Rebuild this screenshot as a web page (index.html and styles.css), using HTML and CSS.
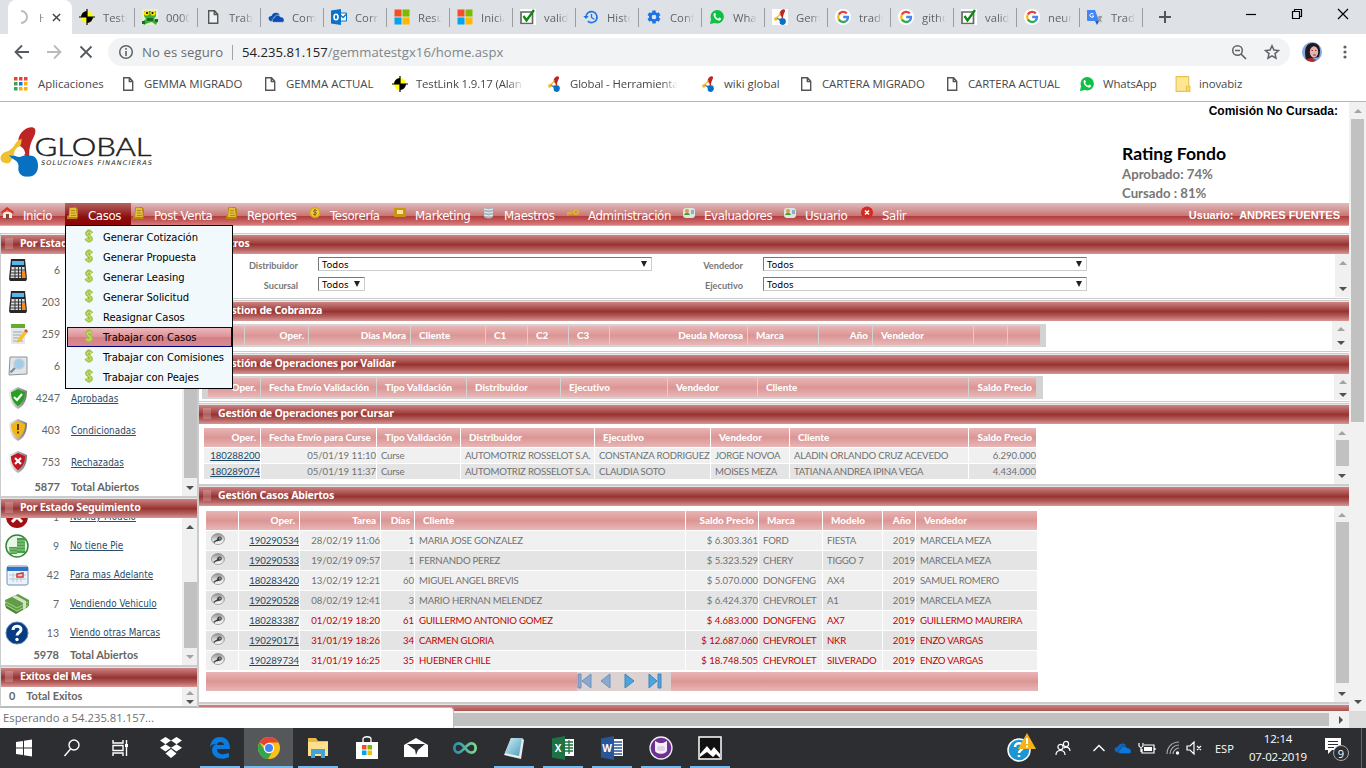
FILE: index.html
```html
<!DOCTYPE html>
<html lang="es">
<head>
<meta charset="utf-8">
<title>Home</title>
<link rel="stylesheet" href="styles.css">
</head>
<body>
<svg class="defs" aria-hidden="true">
  <defs>
    <linearGradient id="g-shield" x1="0" x2="1"><stop offset="0" stop-color="#eee"/><stop offset="1" stop-color="#777"/></linearGradient>
    <linearGradient id="g-teal" x1="0" x2="1"><stop offset="0" stop-color="#2a8fb0"/><stop offset="1" stop-color="#7ed88a"/></linearGradient>
    <linearGradient id="g-note" x1="0" x2="1" y2="1"><stop offset="0" stop-color="#d5eef5"/><stop offset="1" stop-color="#4a9fc0"/></linearGradient>
    <linearGradient id="g-lens" x1="0" x2="0" y2="1"><stop offset="0" stop-color="#8f8f8f"/><stop offset=".6" stop-color="#dedede"/><stop offset="1" stop-color="#fff"/></linearGradient>
  </defs>
  <symbol id="target" viewBox="0 0 16 16"><circle cx="8" cy="8" r="6" fill="#ff0"/><path d="M8 8V2a6 6 0 0 1 6 6zM8 8v6a6 6 0 0 1-6-6z" fill="#000" transform="rotate(90 8 8)"/><path d="M8 0v16M0 8h16" stroke="#000" stroke-width="1.2"/></symbol>
  <symbol id="frog" viewBox="0 0 16 16"><path d="M0 0h16v16H0z" fill="#e4f3d6"/><path d="M2 2h12v5l-2 3 4 2-2 4-4-3-4 1-4 2-2-3 4-3-2-3z" fill="#3cae3c"/><path d="M5 9h6v3H5zM0 12h3v3H0zM13 10h3v3h-3z" fill="#196c21"/><circle cx="4.500" cy="4" r="2.600" fill="#ffe000"/><circle cx="11" cy="4" r="2.600" fill="#ffe000"/><circle cx="5" cy="4" r="1"/><circle cx="10.500" cy="4" r="1"/></symbol>
  <symbol id="page" viewBox="0 0 16 16"><path d="M3.700 1.700h5.800l3.200 3.500v9H3.700zM9.300 2v3.500h3" fill="#fff" fill-opacity=".5" stroke="#555" stroke-width="1.400"/></symbol>
  <symbol id="cloud" viewBox="0 0 18 12"><path d="M1 9c-1-3 1-4 3-4 1-4 6-5 9-2l-5 3-4 5c-1 0-2-1-3-2z" fill="#1152a8"/><path d="M6 12c-2-1-2-4 1-5 1-4 6-4 7-1 3-.5 4 2 4 3 1 2-1 3-2 3z" fill="#0a4fb8" stroke="#dee1e6" stroke-width=".7"/></symbol>
  <symbol id="tcloud" viewBox="0 0 18 12"><path d="M1 9c-1-3 1-4 3-4 1-4 6-5 9-2l-5 3-4 5c-1 0-2-1-3-2z" fill="#0a69c8"/><path d="M6 12c-2-1-2-4 1-5 1-4 6-4 7-1 3-.5 4 2 4 3 1 2-1 3-2 3z" fill="#0a79dc" stroke="#2b2e33" stroke-width=".6"/></symbol>
  <symbol id="outlook" viewBox="0 0 16 16"><path d="M8 4h7.500v8H8z" fill="#fff" stroke="#0a72c8"/><path d="M9 5.500l3 3 4-4" fill="none" stroke="#0a72c8" stroke-width="1.300"/><path d="M0 1.500L10 0v16L0 14.500z" fill="#0a72c8"/><ellipse cx="5" cy="8" rx="2" ry="2.800" fill="none" stroke="#fff" stroke-width="1.600"/></symbol>
  <symbol id="ms" viewBox="0 0 16 16"><path d="M.5.5h7v7h-7z" fill="#f25022"/><path d="M8.500.5h7v7h-7z" fill="#7fba00"/><path d="M.5 8.500h7v7h-7z" fill="#00a4ef"/><path d="M8.500 8.500h7v7h-7z" fill="#ffb900"/></symbol>
  <symbol id="check" viewBox="0 0 16 16"><path d="M0 0h16v16H0z" fill="#fff"/><path d="M1 3h11.500v11.500H1z" fill="#fff" stroke="#666" stroke-width="1.700"/><path d="M3.500 7l3 4.500L14 1" fill="none" stroke="#0b8a0b" stroke-width="2.300"/></symbol>
  <symbol id="hist" viewBox="0 0 16 16"><path d="M3 8a5.500 5.500 0 1 1 1.800 4.200" fill="none" stroke="#1a73e8" stroke-width="1.600"/><path d="M.3 7h5.400L3 10z" fill="#1a73e8"/><path d="M8.500 5v3.500l2.800 1.700" fill="none" stroke="#1a73e8" stroke-width="1.300"/></symbol>
  <symbol id="gear" viewBox="0 0 16 16"><circle cx="8" cy="8" r="3.600" fill="none" stroke="#1a73e8" stroke-width="3"/><path d="M8 1.500v3M8 11.500v3M2.400 4.800L5 6.300M11 9.700l2.600 1.500M2.400 11.200L5 9.700M11 6.300l2.600-1.500" stroke="#1a73e8" stroke-width="3.400"/><circle cx="8" cy="8" r="2.300" fill="#dee1e6"/></symbol>
  <symbol id="wa" viewBox="0 0 16 16"><circle cx="8.200" cy="7.800" r="6.700" fill="#0cc143"/><path d="M1 15l1-5 4 4z" fill="#0cc143"/><path d="M5 4.300c1-1 1.500 0 2 1.500L6.200 7c.7 1.300 1.600 2 2.900 2.700l1.100-1.100 2 1c-.4 2.700-2.600 2.300-4.600 1.200C5.700 9.700 3.700 6.300 5 4.300z" fill="#fff"/></symbol>
  <symbol id="glob" viewBox="0 0 40 52"><path d="M23 29c2-6-5-9-4-16C21 3 33-2 36 3c2 8-7 11-6 29z" fill="#bf2424"/><path d="M22 13c1 8-5 11-8 17-2 4-3 9-8 8-8-1-7-10 1-12 9-3 7-10 15-13z" fill="#f0c030"/><path d="M9 30c7 1 13 0 21 0 7 0 9 5 9 11 0 7-5 11-11 11-7 0-10-5-9-11 0-6-5-6-10-11z" fill="#0870c0"/><path d="M14 29c2-9 9-12 12-1-3 4-8 5-12 1z" fill="#fff"/></symbol>
  <symbol id="gg" viewBox="0 0 16 16"><circle cx="8" cy="8" r="8" fill="#fff"/><g fill="none" stroke-width="2.300"><path d="M11.800 4.400A5 5 0 0 0 3.800 5.600" stroke="#ea4335"/><path d="M3.800 5.600a5 5 0 0 0 0 4.800" stroke="#fbbc05"/><path d="M3.800 10.400a5 5 0 0 0 7.600 1.400" stroke="#34a853"/><path d="M11.400 11.800A5 5 0 0 0 13 8H8.200" stroke="#4285f4"/></g></symbol>
  <symbol id="trans" viewBox="0 0 16 16"><path d="M8 5h8v10H9z" fill="#ddd"/><path d="M0 1h8l4 11H1a1 1 0 0 1-1-1z" fill="#4285f4"/><path d="M8 12h4l-2 4z" fill="#2258c4"/><path d="M6.500 5a2 2 0 1 0 .4 2H5" fill="none" stroke="#fff"/><path d="M11 8h4M13 7c1 4-1 6-2 6M11.500 9l3 4" fill="none" stroke="#777" stroke-width=".9"/></symbol>
  <symbol id="coins" viewBox="0 0 14 14"><path d="M3 1.500L10 1l2 2v8l-1 2H1v-3l2-1z" fill="#b8820f"/><path d="M4 2h6l1 9H3z" fill="#e3bd3c"/><path d="M5 4.500h4M5 7h4M5 9.500h5" stroke="#b5861a"/></symbol>
  <symbol id="dollar" viewBox="0 0 10 14"><path d="M7.800 4.200C7 2 2.300 2 2.600 4.700S7.500 7 7.400 9.600 2.500 12 2 9.500M5 .5v13" fill="none" stroke="#9cc044" stroke-width="3"/><path d="M7.200 4C6.500 2.700 3.200 2.600 3.200 4.600S7 7.300 7 9.500s-3.500 2-4.400.4" fill="none" stroke="#c9df66" stroke-width="1.200"/></symbol>
  <symbol id="calc" viewBox="0 0 20 22"><path d="M3 0h14l2 20-1 2H2l-1-2z" fill="#26282c"/><path d="M4 2h12v4H4z" fill="#56b7ec"/><path d="M3.500 8h13l1 11h-15z" fill="#ddd"/><path d="M2 11h16M2 14h16M2 17h16M7 7v12M10.500 7v12M13.500 7v12" stroke="#333"/><path d="M14 12h3l.5 7H14z" fill="#f58a1f"/></symbol>
  <symbol id="note" viewBox="0 0 20 22"><path d="M3 3h14v18H3z" fill="#e6e9eb"/><path d="M3 1h14v4H3z" fill="#64ad2c"/><path d="M5 9h9M5 12h8M5 15h7M5 18h10" stroke="#9aa"/><path d="M10 16l6-8 3 2-6 8-4 2z" fill="#f7c02c"/><path d="M16 8l2-2 2 2-1 2z" fill="#d64d38"/></symbol>
  <symbol id="find" viewBox="0 0 20 20"><path d="M2 1h17v17L1 19z" fill="#dfe5e9" stroke="#8d9499"/><circle cx="11" cy="8" r="5" fill="#9fcdea" stroke="#c2ced6" stroke-width="1.500"/><path d="M7 12l-4.500 4.500" stroke="#7d8890" stroke-width="2.200"/></symbol>
  <symbol id="shield" viewBox="0 0 20 22"><path d="M10 0l9 4c0 8-2 14-9 18C3 18 1 12 1 4z" fill="url(#g-shield)"/><path d="M10 2l7 3.200c0 6-2 10-7 14-5-4-7-8-7-14z" fill="currentColor"/></symbol>
  <symbol id="red" viewBox="0 0 24 24"><circle cx="12" cy="12" r="11" fill="#a00f12"/><path d="M7 7l10 10M17 7L7 17" stroke="#fff" stroke-width="3"/></symbol>
  <symbol id="money" viewBox="0 0 24 24"><circle cx="12" cy="12" r="11" fill="#e8f5e6" stroke="#35863c" stroke-width="1.500"/><path d="M12 4h8v15h-8zM4 13h8v7H5z" fill="#4a9e4b"/><path d="M12 7h8M12 10h8M12 13h8M12 16h8M4 15h8M5 18h7" stroke="#98cf88"/></symbol>
  <symbol id="cal" viewBox="0 0 24 22"><rect x="2" y="2" width="21" height="19" rx="2" fill="#edf3fa" stroke="#6f90b5"/><path d="M2 3h21v4H2z" fill="#2a75c9"/><path d="M4 11h17M4 15h17M8 9v9M12 9v9M16 9v9" stroke="#b8c7d6"/><path d="M12 10l6-1v4h-6z" fill="none" stroke="#d43a34" stroke-width="1.500"/></symbol>
  <symbol id="cash" viewBox="0 0 24 20"><path d="M0 10l12-3 11 6-12 7-10-6z" fill="#488733"/><path d="M0 6l13-6 11 6v6l-12 6L1 12z" fill="#5f9e44"/><path d="M1 8l11 6 11-6M1 11l11 6 11-6" fill="none" stroke="#a9cf8c"/><path d="M7 3l11 6v7l3-2V7L10 1z" fill="#d9dfc9"/></symbol>
  <symbol id="help" viewBox="0 0 24 24"><circle cx="12" cy="12" r="11" fill="#083b80" stroke="#5d86b5"/><path d="M8 9c0-5 8-5 8-.5 0 3-4 3-4 6" fill="none" stroke="#fff" stroke-width="3"/><circle cx="12" cy="18.500" r="1.700" fill="#fff"/></symbol>
  <symbol id="lens" viewBox="0 0 16 14"><ellipse cx="8" cy="6" rx="6.500" ry="5.500" fill="url(#g-lens)" stroke="#909090" stroke-width=".8"/><path d="M9.500 3.500c3 0 3 4 0 4.300L6 8.500 4 10l-.5-1.500L7 6.500c0-1.500 1-3 2.500-3z" fill="#3c3c3c"/><circle cx="9.800" cy="5.400" r="1" fill="#999"/></symbol>
</svg>

<header class="tabstrip">
  <div class="tab-active"><svg class="spin" viewBox="0 0 14 14"><path d="M4 1a6 6 0 1 1 0 12" fill="none" stroke="#b9bbbe" stroke-width="2"/></svg><span class="h">H</span><svg class="tx" viewBox="0 0 10 10"><path d="M1 1l8 8M9 1L1 9" stroke="#444" stroke-width="1.600"/></svg></div>
  <div class="tab"><svg><use href="#target"/></svg><span>TestL</span></div>
  <div class="tab"><svg><use href="#frog"/></svg><span>0000</span></div>
  <div class="tab"><svg><use href="#page"/></svg><span>Trab</span></div>
  <div class="tab"><svg><use href="#cloud"/></svg><span>Com</span></div>
  <div class="tab"><svg><use href="#outlook"/></svg><span>Corr</span></div>
  <div class="tab"><svg><use href="#ms"/></svg><span>Resu</span></div>
  <div class="tab"><svg><use href="#ms"/></svg><span>Inicia</span></div>
  <div class="tab"><svg><use href="#check"/></svg><span>valid</span></div>
  <div class="tab"><svg><use href="#hist"/></svg><span>Histo</span></div>
  <div class="tab"><svg><use href="#gear"/></svg><span>Conf</span></div>
  <div class="tab"><svg><use href="#wa"/></svg><span>Wha</span></div>
  <div class="tab"><svg class="white"><use href="#glob"/></svg><span>Gem</span></div>
  <div class="tab"><svg><use href="#gg"/></svg><span>tradu</span></div>
  <div class="tab"><svg><use href="#gg"/></svg><span>githu</span></div>
  <div class="tab"><svg><use href="#check"/></svg><span>valid</span></div>
  <div class="tab"><svg><use href="#gg"/></svg><span>neur</span></div>
  <div class="tab"><svg><use href="#trans"/></svg><span>Trad</span></div>
  <svg class="plus" viewBox="0 0 12 12"><path d="M6 0v12M0 6h12" stroke="#555" stroke-width="2"/></svg>
  <div class="winbtns">
    <svg viewBox="0 0 12 12"><path d="M1 6.500h10" stroke="#000" stroke-width="1.200"/></svg>
    <svg viewBox="0 0 12 12"><path d="M3.500 3V1.500h7v7H9M1.500 3.500h7v7h-7z" fill="none" stroke="#000" stroke-width="1.200"/></svg>
    <svg viewBox="0 0 12 12"><path d="M1 1l10 10M11 1L1 11" stroke="#000" stroke-width="1.200"/></svg>
  </div>
</header>

<div class="toolbar">
  <svg viewBox="0 0 16 16"><path d="M15 8H2M8 1.500L1.500 8 8 14.500" fill="none" stroke="#555a60" stroke-width="1.800"/></svg>
  <svg viewBox="0 0 16 16"><path d="M1 8h13M8 1.500L14.500 8 8 14.500" fill="none" stroke="#b8babd" stroke-width="1.800"/></svg>
  <svg viewBox="0 0 16 16"><path d="M2.500 2.500l11 11M13.500 2.500l-11 11" stroke="#555a60" stroke-width="1.800"/></svg>
  <div class="omni">
    <svg viewBox="0 0 16 16"><circle cx="8" cy="8" r="6.300" fill="none" stroke="#5f6368" stroke-width="1.500"/><path d="M8 7v5M8 4v1.700" stroke="#5f6368" stroke-width="1.600"/></svg>
    <span class="sec">No es seguro</span><i></i><span class="url"><b>54.235.81.157</b>/gemmatestgx16/home.aspx</span>
    <svg class="zm" viewBox="0 0 16 16"><circle cx="6.500" cy="6.500" r="4.800" fill="none" stroke="#5f6368" stroke-width="1.500"/><path d="M10 10l5 5M4 6.500h5" stroke="#5f6368" stroke-width="1.700"/></svg>
    <svg class="st" viewBox="0 0 16 16"><path d="M8 1.800l1.900 4.300 4.600.4-3.500 3.100 1 4.600L8 11.800l-4 2.400 1-4.600L1.500 6.500l4.600-.4z" fill="none" stroke="#5f6368" stroke-width="1.500"/></svg>
  </div>
  <svg class="avatar" viewBox="0 0 20 20"><clipPath id="av"><circle cx="10" cy="10" r="10"/></clipPath><g clip-path="url(#av)"><path d="M0 0h20v20H0z" fill="#7fabe2"/><path d="M4 18C1 4 6 1 11 1s9 4 6 14z" fill="#231820"/><ellipse cx="12" cy="10" rx="4.200" ry="5.800" fill="#e3b5ad"/><path d="M4 17l6-1 4 2-2 3H4z" fill="#b22a28"/><path d="M9.500 8.500h1.500M13 8.500h1.500M11 13h3" stroke="#8a4040"/></g></svg>
  <svg class="dots" viewBox="0 0 4 14"><circle cx="2" cy="2" r="1.600"/><circle cx="2" cy="7" r="1.600"/><circle cx="2" cy="12" r="1.600"/></svg>
</div>

<nav class="bookmarks">
  <a><svg viewBox="0 0 14 14"><path d="M0 0h3.500v3.500H0zM5 0h3.500v3.500H5zM10 0h3.500v3.500H10z" fill="#ea4335"/><path d="M0 5h3.500v3.500H0zM0 10h3.500v3.500H0z" fill="#34a853"/><path d="M5 5h3.500v3.500H5z" fill="#1a73e8"/><path d="M10 5h3.500v3.500H10zM5 10h3.500v3.500H5zM10 10h3.500v3.500H10z" fill="#fbb005"/></svg>Aplicaciones</a>
  <a><svg><use href="#page"/></svg>GEMMA MIGRADO</a>
  <a><svg><use href="#page"/></svg>GEMMA ACTUAL</a>
  <a><svg><use href="#target"/></svg><span class="fade">TestLink 1.9.17 (Alan T</span></a>
  <a><svg><use href="#glob"/></svg><span class="fade">Global - Herramientas</span></a>
  <a><svg><use href="#glob"/></svg>wiki global</a>
  <a><svg><use href="#page"/></svg>CARTERA MIGRADO</a>
  <a><svg><use href="#page"/></svg>CARTERA ACTUAL</a>
  <a><svg><use href="#wa"/></svg>WhatsApp</a>
  <a><svg viewBox="0 0 14 14"><path d="M1 .5h11v13H1z" fill="#ffe694" stroke="#e5c44f"/><path d="M10 9h3v4.500h-3z" fill="#ffd95e" stroke="#e5c44f"/></svg>inovabiz</a>
</nav>

<main class="frame">
 <div class="view">
  <header class="brand">
    <svg class="logo" viewBox="0 0 154 56"><svg x="0" y="1" width="39" height="51" viewBox="0 0 40 52"><use href="#glob" width="40" height="52"/></svg>
      <text x="34.500" y="31" class="lg" textLength="117" lengthAdjust="spacingAndGlyphs">GLOBAL</text>
      <text x="41" y="40" class="ls" textLength="111">SOLUCIONES FINANCIERAS</text></svg>
    <div class="rate"><p class="com">Comisión No Cursada:</p><div class="rf"><h1>Rating Fondo</h1><p>Aprobado: 74%</p><p>Cursado : 81%</p></div></div>
  </header>
  <nav class="nav">
    <a><svg viewBox="0 0 14 14"><path d="M2 6h9v6H2z" fill="#f4e7e4"/><path d="M5 8h3v5H5z" fill="#7a4a3c"/><path d="M0 6l6-5 7 5-1 2-6-4-5 4z" fill="#d9331f"/></svg>Inicio</a>
    <a class="on"><svg><use href="#coins"/></svg>Casos</a>
    <a><svg><use href="#coins"/></svg>Post Venta</a>
    <a><svg><use href="#coins"/></svg>Reportes</a>
    <a><svg viewBox="0 0 14 14"><circle cx="7" cy="6.500" r="5.500" fill="#d9a91c"/><circle cx="7" cy="6.500" r="4" fill="#edcb4a"/><path d="M9 5C8 3.500 5 4 5.500 5.500s3 .5 3 2S6 9 5 8M7 3v7" fill="none" stroke="#8a6208"/></svg>Tesorería</a>
    <a><svg viewBox="0 0 14 14"><rect x="1" y="2" width="12" height="9" rx="1" fill="#c99512"/><path d="M4 4h6v4H4z" fill="#fbe49a"/></svg>Marketing</a>
    <a><svg viewBox="0 0 14 14"><path d="M2 2q5-3 9 0v9q-4 3-9 0z" fill="#aab3b8"/><path d="M2 3q5 2 9 0M2 6q5 2 9 0M2 9q5 2 9 0" fill="none" stroke="#eef3f5"/></svg>Maestros</a>
    <a><svg viewBox="0 0 14 14"><circle cx="10" cy="6" r="2.200" fill="none" stroke="#e0b02c" stroke-width="1.800"/><path d="M1 6.500h7M2 7v2.500M4.500 7v2" stroke="#e0b02c" stroke-width="1.500"/></svg>Administración</a>
    <a><svg viewBox="0 0 14 14"><rect x="1" y="2" width="12" height="10" rx="3" fill="#dbe6e4"/><circle cx="5" cy="5" r="2" fill="#e29b36"/><path d="M2 9c1-3 5-3 6 0z" fill="#3da13e"/><path d="M9 5h3M9 7h3" stroke="#447a9b"/></svg>Evaluadores</a>
    <a><svg viewBox="0 0 14 14"><rect x="1" y="2" width="12" height="10" rx="3" fill="#dbe6e4"/><circle cx="5" cy="5" r="2" fill="#e29b36"/><path d="M2 9c1-3 5-3 6 0z" fill="#3da13e"/><path d="M9 5h3M9 7h3" stroke="#447a9b"/></svg>Usuario</a>
    <a><svg viewBox="0 0 14 14"><circle cx="7" cy="6.500" r="6" fill="#d32a22"/><path d="M5 4.500l4 4M9 4.500l-4 4" stroke="#fff" stroke-width="1.600"/></svg>Salir</a>
    <span class="user">Usuario:&nbsp; ANDRES FUENTES</span>
    <div class="menu">
      <a><svg><use href="#dollar"/></svg>Generar Cotización</a>
      <a><svg><use href="#dollar"/></svg>Generar Propuesta</a>
      <a><svg><use href="#dollar"/></svg>Generar Leasing</a>
      <a><svg><use href="#dollar"/></svg>Generar Solicitud</a>
      <a><svg><use href="#dollar"/></svg>Reasignar Casos</a>
      <a class="sel"><svg><use href="#dollar"/></svg>Trabajar con Casos</a>
      <a><svg><use href="#dollar"/></svg>Trabajar con Comisiones</a>
      <a><svg><use href="#dollar"/></svg>Trabajar con Peajes</a>
    </div>
  </nav>
  <div class="cols">
   <aside class="left">
    <div class="sep s2"></div><h2>Por Estado</h2>
    <div class="pane p1">
      <div class="list">
        <div class="row"><svg><use href="#calc"/></svg><b>6</b></div>
        <div class="row"><svg><use href="#calc"/></svg><b>203</b></div>
        <div class="row"><svg><use href="#note"/></svg><b>259</b></div>
        <div class="row"><svg><use href="#find"/></svg><b>6</b></div>
        <div class="row"><svg viewBox="0 0 20 22" class="ok"><use href="#shield"/><path d="M6 10l3 3 5-6" fill="none" stroke="#fff" stroke-width="2"/></svg><b>4247</b><a>Aprobadas</a></div>
        <div class="row"><svg viewBox="0 0 20 22" class="warn"><use href="#shield"/><path d="M10 5v6M10 12.500v2" stroke="#4a3a00" stroke-width="1.800"/></svg><b>403</b><a>Condicionadas</a></div>
        <div class="row"><svg viewBox="0 0 20 22" class="bad"><use href="#shield"/><path d="M7 7l6 6M13 7l-6 6" stroke="#fff" stroke-width="2.200"/></svg><b>753</b><a>Rechazadas</a></div>
        <div class="row total"><i></i><b>5877</b><strong>Total Abiertos</strong></div>
      </div>
      <div class="sb"><u class="up"></u><s></s><u class="dn"></u></div>
    </div>
    <div class="sep s3"></div><h2>Por Estado Seguimiento</h2>
    <div class="pane p2">
      <div class="list">
        <div class="row"><svg><use href="#red"/></svg><b>1</b><a>No hay Modelo</a></div>
        <div class="row"><svg><use href="#money"/></svg><b>9</b><a>No tiene Pie</a></div>
        <div class="row"><svg><use href="#cal"/></svg><b>42</b><a>Para mas Adelante</a></div>
        <div class="row"><svg><use href="#cash"/></svg><b>7</b><a>Vendiendo Vehiculo</a></div>
        <div class="row"><svg><use href="#help"/></svg><b>13</b><a>Viendo otras Marcas</a></div>
        <div class="row total"><i></i><b>5978</b><strong>Total Abiertos</strong></div>
      </div>
      <div class="sb"><u class="up k"></u><s></s><u class="dn g"></u></div>
    </div>
    <div class="sep s3"></div><h2>Exitos del Mes</h2>
    <div class="pane p3"><div class="list"><strong>0</strong><strong>Total Exitos</strong></div><div class="sb"><u class="up"></u><u class="dn"></u></div></div>
   </aside>

   <section class="right">
    <div class="sep s2"></div><h2>Filtros</h2>
    <div class="pane r1">
      <div class="filters">
        <label>Distribuidor</label><div class="sel w1">Todos<i></i></div><label>Vendedor</label><div class="sel w2">Todos<i></i></div>
        <label>Sucursal</label><div class="sel w3">Todos<i></i></div><label>Ejecutivo</label><div class="sel w2">Todos<i></i></div>
      </div>
      <div class="sb"><u class="up"></u><u class="dn"></u></div>
    </div>
    <div class="sep s5"></div><h2>Gestion de Cobranza</h2>
    <div class="pane r2">
      <div class="grid cob th"><span></span><span class="r">Oper.</span><span class="r">Dias Mora</span><span>Cliente</span><span>C1</span><span>C2</span><span>C3</span><span class="r">Deuda Morosa</span><span>Marca</span><span class="r">Año</span><span>Vendedor</span><span></span><span></span></div>
      <div class="sb"><u class="up"></u><u class="dn"></u></div>
    </div>
    <div class="sep s5"></div><h2>Gestión de Operaciones por Validar</h2>
    <div class="pane r3">
      <div class="grid val th"><span class="r">Oper.</span><span>Fecha Envío Validación</span><span>Tipo Validación</span><span>Distribuidor</span><span>Ejecutivo</span><span>Vendedor</span><span>Cliente</span><span class="r">Saldo Precio</span></div>
      <div class="sb"><u class="up"></u><u class="dn"></u></div>
    </div>
    <div class="sep s5"></div><h2>Gestión de Operaciones por Cursar</h2>
    <div class="pane r4">
      <div class="tbl">
        <div class="grid cur th"><span class="r">Oper.</span><span>Fecha Envío para Curse</span><span>Tipo Validación</span><span>Distribuidor</span><span>Ejecutivo</span><span>Vendedor</span><span>Cliente</span><span class="r">Saldo Precio</span></div>
        <div class="grid cur td"><span class="r"><a>180288200</a></span><span class="r">05/01/19 11:10</span><span>Curse</span><span>AUTOMOTRIZ ROSSELOT S.A.</span><span>CONSTANZA RODRIGUEZ</span><span>JORGE NOVOA</span><span>ALADIN ORLANDO CRUZ ACEVEDO</span><span class="r">6.290.000</span></div>
        <div class="grid cur td alt"><span class="r"><a>180289074</a></span><span class="r">05/01/19 11:37</span><span>Curse</span><span>AUTOMOTRIZ ROSSELOT S.A.</span><span>CLAUDIA SOTO</span><span>MOISES MEZA</span><span>TATIANA ANDREA IPINA VEGA</span><span class="r">4.434.000</span></div>
      </div>
      <div class="sb"><u class="up"></u><s></s><u class="dn"></u></div>
    </div>
    <div class="sep s3"></div><h2>Gestión Casos Abiertos</h2>
    <div class="pane r5">
      <div class="tbl">
        <div class="grid abi th"><span></span><span class="r">Oper.</span><span class="r">Tarea</span><span class="r">Días</span><span>Cliente</span><span class="r">Saldo Precio</span><span>Marca</span><span>Modelo</span><span class="r">Año</span><span>Vendedor</span></div>
        <div class="grid abi td"><span><svg><use href="#lens"/></svg></span><span class="r"><a>190290534</a></span><span class="r">28/02/19 11:06</span><span class="r">1</span><span>MARIA JOSE GONZALEZ</span><span class="r">$ 6.303.361</span><span>FORD</span><span>FIESTA</span><span class="r">2019</span><span>MARCELA MEZA</span></div>
        <div class="grid abi td alt"><span><svg><use href="#lens"/></svg></span><span class="r"><a>190290533</a></span><span class="r">19/02/19 09:57</span><span class="r">1</span><span>FERNANDO PEREZ</span><span class="r">$ 5.323.529</span><span>CHERY</span><span>TIGGO 7</span><span class="r">2019</span><span>MARCELA MEZA</span></div>
        <div class="grid abi td"><span><svg><use href="#lens"/></svg></span><span class="r"><a>180283420</a></span><span class="r">13/02/19 12:21</span><span class="r">60</span><span>MIGUEL ANGEL BREVIS</span><span class="r">$ 5.070.000</span><span>DONGFENG</span><span>AX4</span><span class="r">2019</span><span>SAMUEL ROMERO</span></div>
        <div class="grid abi td alt"><span><svg><use href="#lens"/></svg></span><span class="r"><a>190290528</a></span><span class="r">08/02/19 12:41</span><span class="r">3</span><span>MARIO HERNAN MELENDEZ</span><span class="r">$ 6.424.370</span><span>CHEVROLET</span><span>A1</span><span class="r">2019</span><span>MARCELA MEZA</span></div>
        <div class="grid abi td late"><span><svg><use href="#lens"/></svg></span><span class="r"><a>180283387</a></span><span class="r">01/02/19 18:20</span><span class="r">61</span><span>GUILLERMO ANTONIO GOMEZ</span><span class="r">$ 4.683.000</span><span>DONGFENG</span><span>AX7</span><span class="r">2019</span><span>GUILLERMO MAUREIRA</span></div>
        <div class="grid abi td alt late"><span><svg><use href="#lens"/></svg></span><span class="r"><a>190290171</a></span><span class="r">31/01/19 18:26</span><span class="r">34</span><span>CARMEN GLORIA</span><span class="r">$ 12.687.060</span><span>CHEVROLET</span><span>NKR</span><span class="r">2019</span><span>ENZO VARGAS</span></div>
        <div class="grid abi td late"><span><svg><use href="#lens"/></svg></span><span class="r"><a>190289734</a></span><span class="r">31/01/19 16:25</span><span class="r">35</span><span>HUEBNER CHILE</span><span class="r">$ 18.748.505</span><span>CHEVROLET</span><span>SILVERADO</span><span class="r">2019</span><span>ENZO VARGAS</span></div>
        <div class="pager"><div><svg viewBox="0 0 94 19"><path d="M1 2h3v14H1zM14 2v14L5 9zM33 2v14l-9-7z" fill="#8aa9cf" stroke="#6b92c0"/><path d="M48 2v14l9-7zM72 2v14l8-7zM81 2h3v14h-3z" fill="#4fa3dc" stroke="#3c86bd"/></svg></div></div>
      </div>
      <div class="sb"><u class="up"></u><s></s><u class="dn"></u></div>
    </div>
    <div class="sep s3"></div><h2 class="cut"></h2>
   </section>
  </div>
  <div class="hs"><s></s><u></u></div>
 </div>
 <div class="vs"><u class="up"></u><s></s><u class="dn"></u><em></em></div>
 <div class="status">Esperando a 54.235.81.157...</div>
</main>

<footer class="taskbar">
  <div class="apps">
    <i><svg viewBox="0 0 24 24"><path d="M4 6l7-1v6.500H4zM12 4.800l8-1.300v8h-8zM4 12.500h7V19l-7-1zM12 12.500h8v8l-8-1.300z" fill="#fff"/></svg></i>
    <i><svg viewBox="0 0 24 24"><circle cx="13" cy="9" r="5" fill="none" stroke="#fff" stroke-width="1.400"/><path d="M9.500 13L3.500 20" stroke="#fff" stroke-width="1.400"/></svg></i>
    <i><svg viewBox="0 0 24 24"><path d="M3 4v3h10V4M3 20v-3h10v3M3 9.500h10v5H3zM16.500 4v16" fill="none" stroke="#fff" stroke-width="1.400"/><path d="M15 8h3v3h-3z" fill="#fff"/></svg></i>
    <i><svg viewBox="0 0 24 24"><path d="M6.500 1L12 4.600 6.500 8.200 1 4.600zM17.500 1L23 4.600l-5.500 3.600L12 4.600zM6.500 8.200L12 11.800l-5.500 3.600L1 11.800zM17.500 8.200l5.500 3.600-5.500 3.600-5.500-3.600zM12 13l5.500 4.500L12 22l-5.500-4.500z" fill="#fff"/></svg></i>
    <i class="run"><svg viewBox="0 0 24 24"><path d="M2 11C3 4 7 1 12 1c7 0 10 5 10 12H9c0 6 7 6 12 4v4c-7 4-17 1-17-7 0-3 2-5 4-6-3 0-5 1-6 3zm7-2h7c0-4-7-4-7 0z" fill="#0a7be0"/></svg></i>
    <i class="run cur"><svg viewBox="0 0 24 24"><circle cx="12" cy="12" r="11" fill="#fbc116"/><path d="M12 12L2.500 6.500A11 11 0 0 1 21.500 6.500H12z" fill="#e54335"/><path d="M2.500 6.500A11 11 0 0 0 11 23l5-8.500-8 0z" fill="#30a64e"/><circle cx="12" cy="12" r="5.200" fill="#fff"/><circle cx="12" cy="12" r="4" fill="#4285f4"/></svg></i>
    <i class="run"><svg viewBox="0 0 24 24"><path d="M2 2h8l2 3h10v15H2z" fill="#e8b94a"/><path d="M2 6h20v14H2z" fill="#ffe08a"/><path d="M5 13h14v9h-4v-4H9v4H5z" fill="#3fa4dc"/></svg></i>
    <i><svg viewBox="0 0 24 24"><path d="M1 6h22v17H1z" fill="#fff"/><path d="M8 6V3c0-3 8-3 8 0v3" fill="none" stroke="#fff" stroke-width="1.300"/><path d="M7 9h4.500v4.500H7z" fill="#f25022"/><path d="M12.500 9H17v4.500h-4.500z" fill="#7fba00"/><path d="M7 14.500h4.500V19H7z" fill="#00a4ef"/><path d="M12.500 14.500H17V19h-4.500z" fill="#ffb900"/></svg></i>
    <i><svg viewBox="0 0 24 24"><path d="M0 9l12-7 12 7v12H0z" fill="#fff"/><path d="M3 8h18l-7 6-2 5-1-5z" fill="#2b2e33"/></svg></i>
    <i><svg viewBox="0 0 26 24"><path d="M13 12c-3-4-5-5-7-5-6 0-6 10 0 10 4 0 9-10 14-10 6 0 6 10 0 10-2 0-4-1-7-5" fill="none" stroke="url(#g-teal)" stroke-width="3"/></svg></i>
    <i class="run"><svg viewBox="0 0 24 24"><path d="M9 2l11 0 2 2-3 19-17-4z" fill="#e8ecee"/><path d="M9 2h11l-3 18-14-3z" fill="url(#g-note)"/></svg></i>
    <i class="run"><svg viewBox="0 0 24 24"><path d="M12 3h11v17H12z" fill="#fff"/><path d="M14 6h8M14 9h8M14 12h8M14 15h8M18 4v14" stroke="#1f7244" stroke-width="1.300"/><path d="M1 2.500L14 0v24L1 21.500z" fill="#1f7244"/></svg><b>X</b></i>
    <i class="run"><svg viewBox="0 0 24 24"><path d="M12 3h11v17H12z" fill="#fff"/><path d="M14 6h8M14 9h8M14 12h8M14 15h8M14 18h8" stroke="#2a5699" stroke-width="1.300"/><path d="M1 2.500L14 0v24L1 21.500z" fill="#2a5699"/></svg><b>W</b></i>
    <i class="run"><svg viewBox="0 0 24 24"><circle cx="12" cy="12" r="11" fill="#6e3193" stroke="#eee" stroke-width="1.300"/><path d="M6 5l4 2h4l4-2v9c0 5-12 5-12 0z" fill="#f4f0f6"/><rect x="8" y="10" width="8" height="5" rx="2.500" fill="#ded0e6"/></svg></i>
    <i class="run"><svg viewBox="0 0 24 24"><path d="M1 1h22v22H1z" fill="#111" stroke="#fff" stroke-width="1.500"/><path d="M2 18l7-8 4 5 3-4 6 7v4l-4-4-3 3-6-5-7 5z" fill="#fff"/></svg></i>
  </div>
  <div class="tray">
    <svg class="t1" viewBox="0 0 30 30"><circle cx="12" cy="18" r="11" fill="#1a96d4" stroke="#fff" stroke-width="1.500"/><path d="M8 15c0-5 8-5 8 0 0 3-4 3-4 6M12 23v2" fill="none" stroke="#fff" stroke-width="2.500"/><path d="M20 1l9 16H11z" fill="#f8b218"/><path d="M20 6v6M20 13.500v2" stroke="#fff" stroke-width="2"/></svg>
    <svg class="t2" viewBox="0 0 16 16"><circle cx="5.500" cy="7" r="2.600" fill="none" stroke="#fff" stroke-width="1.200"/><circle cx="11" cy="4" r="2.600" fill="none" stroke="#fff" stroke-width="1.200"/><path d="M1 15c0-6 9-6 9 0M9 8c3-2 6 0 6 3" fill="none" stroke="#fff" stroke-width="1.200"/></svg>
    <svg class="t3" viewBox="0 0 14 14"><path d="M1.500 10L7 4.500l5.500 5.500" fill="none" stroke="#fff" stroke-width="1.400"/></svg>
    <svg class="t4" viewBox="0 0 18 12"><use href="#tcloud"/></svg>
    <svg class="t5" viewBox="0 0 18 14"><path d="M6 4h10v8H4V8M17 7v2M1 2v3q2 3 4 0V2M3 6v5" fill="none" stroke="#fff" stroke-width="1.200"/><path d="M6 6h8v4H6z" fill="#fff"/></svg>
    <svg class="t6" viewBox="0 0 14 14"><g fill="none" stroke="#a9abad" stroke-width="1.200"><path d="M1 13C1 6 6 1 13 1M4 13C4 8 8 4 13 4M7 13c0-3 3-6 6-6"/></g><circle cx="11.500" cy="12" r="1.700" fill="#fff"/></svg>
    <svg class="t7" viewBox="0 0 16 14"><path d="M1 5h3l4-4v12L4 9H1zM11 5l4 4M15 5l-4 4" fill="none" stroke="#fff" stroke-width="1.200"/></svg>
    <span class="esp">ESP</span>
    <span class="clock">12:14<br>07-02-2019</span>
    <svg class="t8" viewBox="0 0 26 24"><path d="M1 1h16v12H8l-4 4v-4H1z" fill="#fff"/><path d="M4 4.500h10M4 7.500h10M4 10.500h6" stroke="#2b2e33"/><circle cx="17" cy="16" r="7.500" fill="#2b2e33" stroke="#aaa"/><text x="17" y="20.500" text-anchor="middle">9</text></svg>
  </div>
</footer>
</body>
</html>
```
FILE: styles.css
```css
* { box-sizing: border-box; }
body { margin: 0; width: 1366px; height: 768px; overflow: hidden; background: #fff; font-family: "Open Sans", "Noto Sans", sans-serif; }
svg { display: block; flex: none; }
.defs { position: absolute; width: 0; height: 0; }
h1, h2, p { margin: 0; }
i { font-style: normal; }

/* browser chrome */
.tabstrip { display: flex; height: 34px; background: #dee1e6; }
.tab-active { display: flex; align-items: center; width: 64px; margin-left: 8px; background: #fff; border-radius: 8px 8px 0 0; padding-left: 9px; }
.spin { width: 14px; height: 14px; }
.h { width: 9px; margin-left: 8px; overflow: hidden; font-size: 11.5px; color: #555; mask-image: linear-gradient(90deg, #000, transparent 60%); }
.tx { width: 9px; height: 9px; margin-left: 4px; }
.tab { display: flex; align-items: center; width: 63px; padding-left: 7px; background: linear-gradient(#9a9da1, #9a9da1) right 8px / 1px 19px no-repeat; }
.tab svg { width: 16px; height: 16px; }
.tab .white { background: #fff; }
.tab span { width: 24px; margin-left: 8px; overflow: hidden; white-space: nowrap; font-size: 11.3px; color: #60646a; mask-image: linear-gradient(90deg, #000 60%, transparent); }
.plus { width: 12px; height: 12px; margin: 11px 0 0 16px; }
.winbtns { display: flex; margin: 8px 0 0 74px; gap: 34px; }
.winbtns svg { width: 12px; height: 12px; }
.toolbar { display: flex; align-items: center; height: 36px; padding-left: 14px; }
.toolbar > svg { width: 16px; height: 16px; margin-right: 16px; }
.omni { display: flex; align-items: center; width: 1182px; height: 28px; border-radius: 14px; background: #f1f3f4; padding-left: 10px; font-size: 13.1px; color: #80868b; margin-left: -2px; }
.omni svg { width: 16px; height: 16px; }
.sec { width: 98px; padding-left: 8px; color: #6a6e73; white-space: nowrap; letter-spacing: .1px; }
.omni i { width: 1px; height: 15px; background: #a0a3a7; margin: 0 9px 0 0; }
.url { flex: 1; letter-spacing: .04px; }
.url b { font-weight: 400; color: #202124; }
.zm { margin-right: 17px; }
.st { margin-right: 10px; }
.toolbar .avatar { width: 20px; height: 20px; margin: 0 0 0 12px; }
.toolbar .dots { width: 4px; height: 14px; margin: 0 0 0 21px; fill: #5f6368; }
.bookmarks { display: grid; grid-template-columns: 106px 142px 130px 154px 154px 98px 146px 135px 96px auto; height: 32px; padding-left: 14px; border-bottom: 1px solid #b6b4b6; font-size: 11.4px; color: #45484c; }
.bookmarks a { display: flex; align-items: center; height: 27px; white-space: nowrap; gap: 10px; }
.bookmarks a:nth-child(n+2) { gap: 8px; }
.bookmarks svg { width: 14px; height: 14px; }
.bookmarks a:nth-child(n+2) svg { width: 16px; height: 16px; }
.bookmarks a:nth-child(n+7) { letter-spacing: -.1px; }
.fade { width: 108px; overflow: hidden; letter-spacing: -.15px; mask-image: linear-gradient(90deg, #000 85%, transparent); }

/* page frame */
.frame { position: relative; display: flex; height: 626px; }
.view { width: 1349px; height: 626px; overflow: hidden; }
.brand { display: flex; justify-content: space-between; height: 101px; }
.logo { width: 154px; height: 56px; margin-top: 23px; }
.lg { font: 300 25px Lato, sans-serif; fill: #222; stroke: #222; stroke-width: .5; }
.ls { font: italic 6.5px "DejaVu Sans", sans-serif; fill: #222; }
.rate { width: 228px; }
.com { font: bold 12px/18px "Liberation Sans", Arial, sans-serif; width: 217px; text-align: right; color: #000; }
.rf { margin-top: 22px; margin-left: 1px; font-family: Lato, sans-serif; font-weight: 700; }
.rf h1 { font-size: 17.6px; line-height: 23px; }
.rf p { font-size: 13.2px; line-height: 19px; color: #777; }
.nav { position: relative; z-index: 3; display: grid; grid-template-columns: 65px 66px 93px 83px 85px 89px 84px 116px 101px 77px 60px 1fr; height: 23px; background: linear-gradient(#e2bcbc, #c67676 55%, #b33c3c 58%, #d77a7a 95%, #edc4c4); color: #fff; font: 11.8px "DejaVu Sans", Verdana, sans-serif; letter-spacing: -.37px; }
.nav > a { display: flex; gap: 7px; padding-left: 2px; line-height: 26px; white-space: nowrap; }
.nav > a > svg { width: 14px; height: 14px; margin: 3px 0 0 -1px; }
.nav > a { gap: 8px; }
.nav .on { background: linear-gradient(#b46464, #8b0e0c 55%, #8e0000); }
.user { font: bold 11px/25px "Liberation Sans", Arial, sans-serif; text-align: right; padding-right: 9px; white-space: nowrap; letter-spacing: 0; }
.menu { position: absolute; left: 65px; top: 22px; width: 168px; height: 164px; border: 1px solid #000; background: #f1f9fc; padding: 1px 0 0 1px; color: #000; font-size: 10px; letter-spacing: -.05px; }
.menu a { display: flex; align-items: center; gap: 9px; height: 20px; padding-left: 16px; border: 1px solid transparent; white-space: nowrap; }
.menu svg { width: 10px; height: 14px; margin-top: -2px; }
.menu .sel { background: linear-gradient(#eab9bd, #dd9196 50%, #d57f86 52%, #d98a90); border-color: #000080; }

.cols { display: flex; height: 485px; padding-top: 7px; overflow: hidden; }
.left { width: 199px; border-left: 1px solid #ccc; border-right: 2px solid #ccc; background: #fff; }
.right { width: 1150px; }
.sep { background: #ccc; }
.s2 { height: 2px; background: linear-gradient(#ccc 50%, #eee 50%); }
.s3 { height: 3px; background: linear-gradient(#ccc 66%, #e5e5e5 66%); }
.s5 { height: 5px; background: linear-gradient(#fff 20%, #ccc 20% 40%, #fff 40% 60%, #ccc 60% 80%, #e5e5e5 80%); }
h2 { position: relative; height: 19px; padding-left: 19px; font: bold 10.6px/16px "Noto Sans", sans-serif; letter-spacing: -.24px; color: #fff; white-space: nowrap; background: linear-gradient(#cd8483, #b25d5b 25%, #973432 50%, #b25d5b 75%, #d99795); }
h2::before { content: ""; position: absolute; left: 4px; top: 3px; width: 8px; height: 11px; opacity: .7; background: radial-gradient(circle at 50% 50%, #f0d4d3 35%, transparent 60%) 0 0 / 2px 2px; }
.cut { height: 19px; }
.pane { display: flex; justify-content: space-between; overflow: hidden; }

/* scrollbars */
.sb { position: relative; width: 15px; background: #f0f0f0; display: flex; flex-direction: column; padding: 7px 0 6px 2px; }
.sb s { background: #c1c1c1; }
u { text-decoration: none; width: 0; height: 0; border: 4px solid transparent; }
.up { border-top: 0; border-bottom-color: #a3a3a3; }
.up.k { border-bottom-color: #505050; }
.dn { border-bottom: 0; border-top-color: #505050; margin-top: auto; }
.dn.g { border-top-color: #a3a3a3; }
.sb u { margin-left: 2px; flex: none; }

/* left column */
.p1 { height: 242px; } .p2 { height: 147px; } .p3 { height: 20px; border-bottom: 1px solid #bbb; }
.list { width: 180px; font-family: Lato, sans-serif; font-size: 10.5px; color: #666; }
.row { display: grid; grid-template-columns: 34px 25px 1fr; align-items: center; height: 32px; white-space: nowrap; }
.row svg { width: 20px; height: 22px; margin-left: 7px; }
.row b { font-weight: 400; text-align: right; justify-self: end; }
.row a { padding-left: 11px; font: 9.8px "DejaVu Sans Condensed", sans-serif; letter-spacing: .03px; }
a { color: inherit; }
.row a { text-decoration: underline; color: #2a4d69; }
.row strong { padding-left: 11px; }
.total { height: 17px; font-size: 11px; }
.total b { font-weight: 700; }
.ok { color: #26a020; } .warn { color: #f2b61c; } .bad { color: #c31420; }
.p1 s { margin-top: auto; height: 216px; } .p1 .up { display: none; } .p1 .dn { margin-top: 8px; }
.p2 .list { margin-top: -16px; }
.p2 .row { height: 29px; grid-template-columns: 33px 25px 1fr; }
.p2 .row.total { height: 15px; }
.p2 .row svg { width: 24px; height: 24px; margin-left: 4px; }
.p2 s { margin-top: 53px; height: 66px; }
.p3 .list { display: flex; gap: 11px; padding-left: 8px; line-height: 18px; font-size: 10.9px; }
.p3 .sb { padding: 4px 0 2px 2px; }

/* right column */
.r1 { height: 43px; } .r2 { height: 29px; } .r3 { height: 26px; } .r4 { height: 60px; } .r5 { height: 196px; }
.filters { display: grid; grid-template-columns: 99px 334px 71px 1fr; grid-template-rows: 20px 20px; column-gap: 20px; width: 1000px; padding-top: 3px; font: 700 9.2px/18px Lato, sans-serif; color: #777; }
.filters label { text-align: right; }
.filters .sel { height: 14px; border: 1px solid #ccc; border-top-color: #777; border-left-color: #777; font: 9.5px/13px "Noto Sans", sans-serif; color: #000; padding-left: 3px; display: flex; justify-content: space-between; padding-right: 4px; }
.sel i { width: 0; height: 0; margin-top: 3px; border: 3.5px solid transparent; border-top: 6px solid #222; border-bottom: 0; }
.w2 { width: 324px; } .w3 { width: 47px; }
.r2 .sb { width: 17px; padding: 6px 0 5px 3px; } .r3 .sb { padding: 6px 0 3px 3px; }
.r1 .sb { width: 14px; padding-bottom: 6px; }
.r4 s { height: 26px; margin-top: 5px; } .r5 s { height: 161px; margin-top: 5px; }
.grid { display: grid; column-gap: 1px; }
.grid span { white-space: nowrap; min-width: 0; }
.th { font: 900 9.9px/19px Lato, sans-serif; letter-spacing: -.02px; color: #fff; }
.th span { height: 19px; padding: 0 4px 0 8px; background: linear-gradient(#e8b5b5, #db9694 50%, #e8b7b7); }
.td { font: 9.6px/16px Lato, sans-serif; letter-spacing: -.22px; color: #707070; margin-top: 1px; }
.td span { background: #f0f0f0; padding-left: 4px; }
.alt span { background: #e4e4e4; }
.r { text-align: right; }
.td .r { padding: 0; letter-spacing: -.03px; }
.td a { text-decoration: underline; color: #1f4866; }
.late span { color: #c00000; }
.cob, .val { background: #d3d3d3; height: 23px; padding: 2px 0 2px 2px; }
.cob { margin: 3px 0 0 3px; width: 844px; grid-template-columns: 40px 63px 101px 74px 41px 40px 40px 137px 70px 53px 100px 33px 32px; }
.val { margin: 2px 0 0 3px; width: 841px; padding-left: 6px; grid-template-columns: 52px 115px 89px 93px 106px 89px 210px 67px; }
.cur { grid-template-columns: 56px 115px 83px 133px 115px 78px 178px 67px; }
.r4 .tbl { margin: 4px 0 0 5px; }
.r4 .td { line-height: 15px; height: 15px; }
.abi { grid-template-columns: 32px 60px 80px 33px 270px 72px 63px 59px 32px 121px; }
.r5 .tbl { margin: 5px 0 0 7px; width: 832px; }
.abi.td { line-height: 19px; height: 19px; }
.abi.td svg { width: 16px; height: 14px; margin-top: 2px; }
.pager { height: 19px; margin-top: 2px; padding-left: 371px; background: linear-gradient(#e8b5b5, #db9694 50%, #e8b7b7); }
.pager div { width: 94px; background: #dcd2d2; }
.hs { display: flex; align-items: center; height: 17px; background: #f1f1f1; }
.hs s { width: 1329px; height: 13px; background: #c1c1c1; }
.hs u { border-left-color: #505050; border-right: 0; margin-left: 10px; }
.vs { display: flex; flex-direction: column; width: 17px; background: #f1f1f1; padding: 7px 2px 0; }
.vs u { margin-left: 3px; } .vs s { height: 303px; margin-top: 6px; background: #c1c1c1; }
.vs em { height: 17px; margin: 7px -2px 0; background: #dcdcdc; }
.status { position: absolute; left: 0; bottom: 0; z-index: 4; width: 454px; height: 21px; background: #fff; border-top: 1px solid #bbb; border-right: 1px solid #bbb; border-radius: 0 4px 0 0; font-size: 11.3px; line-height: 19px; padding-left: 3px; color: #6b6f74; }

/* taskbar */
.taskbar { display: flex; justify-content: space-between; height: 40px; background: #2c2e32; color: #fff; }
.apps { display: flex; margin-left: -1px; }
.apps > i { position: relative; width: 49px; display: flex; align-items: center; justify-content: center; }
.apps svg { width: 24px; height: 24px; }
.run { background: linear-gradient(#76b9ed, #76b9ed) center bottom / 40px 2px no-repeat; }
.run.cur { display: flex; background-size: 49px 2px; background-color: #55585b; }
.apps b { position: absolute; left: 15px; top: 12px; width: 10px; text-align: center; font: bold 10px/16px "Open Sans", sans-serif; }
.tray { display: flex; align-items: center; width: 360px; background: linear-gradient(#666, #666) right 4px top / 1px 40px no-repeat; }
.t1 { width: 30px; height: 30px; margin-left: 1px; margin-top: -2px; }
.t2 { width: 16px; height: 16px; margin-left: 18px; }
.t3 { width: 14px; height: 14px; margin-left: 21px; }
.t4 { width: 17px; height: 12px; margin-left: 8px; }
.t5 { width: 18px; height: 14px; margin-left: 7px; }
.t6 { width: 14px; height: 14px; margin-left: 10px; }
.t7 { width: 16px; height: 14px; margin-left: 6px; }
.esp { width: 22px; margin-left: 13px; font-size: 11px; }
.clock { width: 72px; margin-left: 5px; text-align: center; font-size: 11.5px; line-height: 18px; white-space: nowrap; letter-spacing: -.2px; }
.t8 { width: 26px; height: 24px; margin-left: 10px; margin-top: 2px; }
.t8 text { font: 11px "Open Sans", sans-serif; fill: #fff; }
```
